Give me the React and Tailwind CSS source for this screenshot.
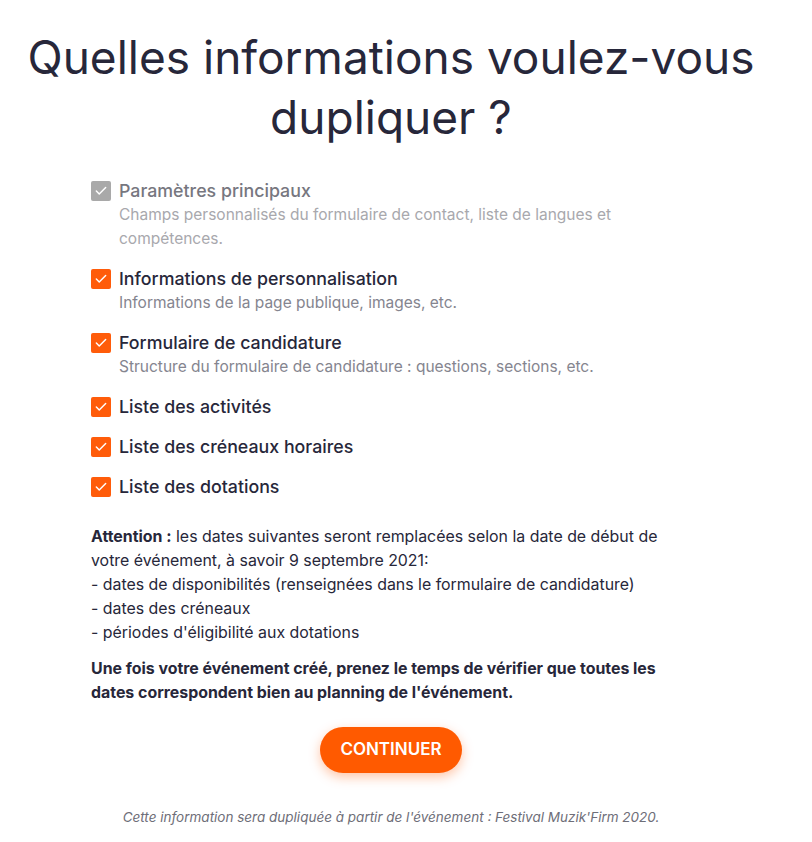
import { Check } from 'lucide-react';

const options = [
  {
    label: 'Paramètres principaux',
    description: 'Champs personnalisés du formulaire de contact, liste de langues et compétences.',
    disabled: true
  },
  { label: 'Informations de personnalisation', description: 'Informations de la page publique, images, etc.' },
  {
    label: 'Formulaire de candidature',
    description: 'Structure du formulaire de candidature : questions, sections, etc.'
  },
  { label: 'Liste des activités' },
  { label: 'Liste des créneaux horaires' },
  { label: 'Liste des dotations' }
];

function OptionRow({ label, description, disabled }) {
  return (
    <div className="flex gap-2">
      <div className="flex h-6 w-5 shrink-0 items-center">
        <span
          className={`flex h-5 w-5 items-center justify-center rounded-[2px] ${disabled ? 'bg-[#a9a9a9]' : 'bg-[#ff5c0a]'}`}
        >
          <Check className="h-[14px] w-[14px] text-white" strokeWidth={2.5} />
        </span>
      </div>
      <div>
        <p className={`text-[17.8px] leading-6 font-medium ${disabled ? 'text-[#77777f]' : 'text-[#27273a]'}`}>{label}</p>
        {description && (
          <p className={`text-[15.5px] leading-6 ${disabled ? 'text-[#a8a8ad]' : 'text-[#85858f]'}`}>{description}</p>
        )}
      </div>
    </div>
  );
}

export default function App() {
  return (
    <div className="min-h-[842px] w-[782px] bg-white pt-[27px] font-['Inter',sans-serif] text-[#27273a]">
      <h1 className="mx-auto w-[740px] text-center text-[46px] leading-[60px] font-normal text-[#27273a]">
        Quelles informations voulez-vous dupliquer ?
      </h1>
      <div className="mx-auto mt-8 w-[600px]">
        <div className="flex flex-col gap-4">
          {options.map(opt => (
            <OptionRow key={opt.label} {...opt} />
          ))}
        </div>
        <div className="mt-[26px] text-[15.9px] leading-6 text-[#27273a]">
          <p>
            <span className="font-bold">Attention :</span> les dates suivantes seront remplacées selon la date de début de
            votre événement, à savoir 9 septembre 2021:
          </p>
          <p>- dates de disponibilités (renseignées dans le formulaire de candidature)</p>
          <p>- dates des créneaux</p>
          <p>- périodes d'éligibilité aux dotations</p>
          <p className="mt-3 font-bold">
            Une fois votre événement créé, prenez le temps de vérifier que toutes les dates correspondent bien au planning
            de l'événement.
          </p>
        </div>
      </div>
      <div className="mt-[22px] flex justify-center">
        <button
          type="button"
          className="h-[46px] rounded-full bg-[#ff5a00] px-5 text-[17px] font-semibold text-white shadow-[0_4px_12px_rgba(255,90,0,0.35)]"
        >
          CONTINUER
        </button>
      </div>
      <p className="mt-[34px] text-center text-[13.5px] leading-5 italic text-[#6e6e78]">
        Cette information sera dupliquée à partir de l'événement : Festival Muzik'Firm 2020.
      </p>
    </div>
  );
}
